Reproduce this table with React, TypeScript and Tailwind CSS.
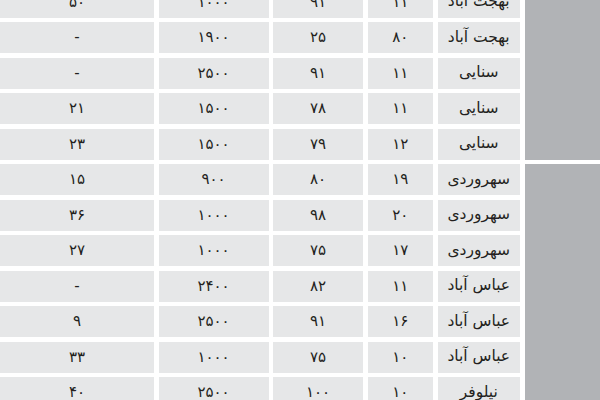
import React from 'react';

type Row = [string, string, string, string, string];

const groups: Row[][] = [
  [
    ['بهجت آباد', '۱۱', '۹۱', '۱۰۰۰', '۵۰'],
    ['بهجت آباد', '۸۰', '۲۵', '۱۹۰۰', '-'],
    ['سنایی', '۱۱', '۹۱', '۲۵۰۰', '-'],
    ['سنایی', '۱۱', '۷۸', '۱۵۰۰', '۲۱'],
    ['سنایی', '۱۲', '۷۹', '۱۵۰۰', '۲۳'],
  ],
  [
    ['سهروردی', '۱۹', '۸۰', '۹۰۰', '۱۵'],
    ['سهروردی', '۲۰', '۹۸', '۱۰۰۰', '۳۶'],
    ['سهروردی', '۱۷', '۷۵', '۱۰۰۰', '۲۷'],
    ['عباس آباد', '۱۱', '۸۲', '۲۴۰۰', '-'],
    ['عباس آباد', '۱۶', '۹۱', '۲۵۰۰', '۹'],
    ['عباس آباد', '۱۰', '۷۵', '۱۰۰۰', '۳۳'],
    ['نیلوفر', '۱۰', '۱۰۰', '۲۵۰۰', '۴۰'],
  ],
];

const widths = ['w-[82.5px]', 'w-[65.5px]', 'w-[90px]', 'w-[110px]', 'w-[154px]'];

const Cell: React.FC<{ w: string; children: React.ReactNode }> = ({ w, children }) => (
  <div className={`${w} shrink-0 h-[31px] bg-[#e6e7e8] flex items-center justify-center`}>
    {children}
  </div>
);

const App: React.FC = () => {
  return (
    <div
      dir="rtl"
      className="w-[600px] h-[400px] overflow-hidden bg-white text-[#231f20] leading-none"
      style={{ fontFamily: '"DejaVu Sans", sans-serif' }}
    >
      <div className="-mt-[13.5px] pr-[0.5px] flex flex-col gap-[4.5px]">
        {groups.map((rows, gi) => (
          <div key={gi} className="flex gap-[4.5px]">
            {/* gray side block */}
            <div className="w-[75px] shrink-0 bg-[#b1b3b6]" />
            <div className="flex flex-col gap-[4.5px]">
              {rows.map((r, ri) => (
                <div key={ri} className="flex gap-[4.5px]">
                  {r.map((v, ci) => (
                    <Cell key={ci} w={widths[ci]}>
                      <span className={ci === 0 ? 'text-[15.5px]' : 'text-[15px]'}>{v}</span>
                    </Cell>
                  ))}
                </div>
              ))}
            </div>
          </div>
        ))}
      </div>
    </div>
  );
};

export default App;
